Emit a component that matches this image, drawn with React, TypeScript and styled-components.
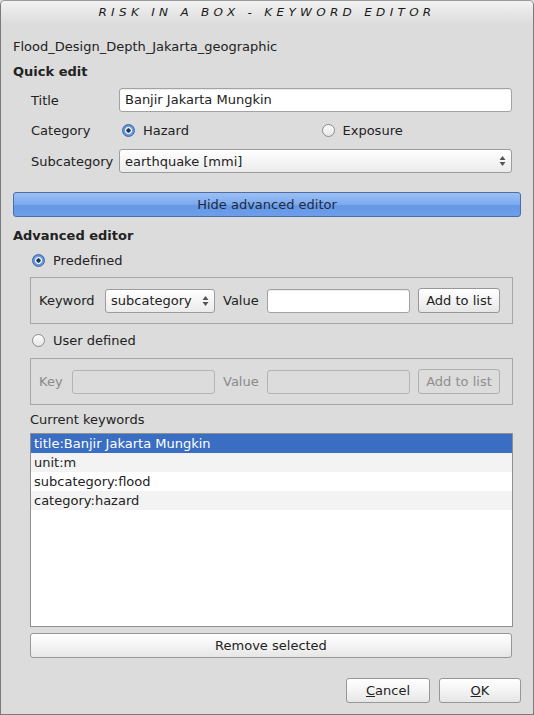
import React from "react";
import styled, { createGlobalStyle } from "styled-components";

const Global = createGlobalStyle`
  html, body { margin: 0; padding: 0; background: #dcdcdc; }
  body { font-family: "DejaVu Sans", "Liberation Sans", sans-serif; font-size: 13px; color: #222; }
  * { box-sizing: border-box; }
`;

const Window = styled.div`
  width: 534px;
  height: 715px;
  background: #dcdcdc;
  border: 1px solid #7a7a7a;
  border-top-color: #9a9a9a;
  border-radius: 5px 5px 0 0;
  display: flex;
  flex-direction: column;
  overflow: hidden;
`;

const TitleBar = styled.div`
  height: 24px;
  flex: none;
  display: flex;
  align-items: center;
  justify-content: center;
  background: linear-gradient(#f2f2f2, #e4e4e4 60%, #dcdcdc);
`;

const TitleText = styled.span`
  font-family: "DejaVu Sans", sans-serif;
  font-style: italic;
  font-size: 12px;
  letter-spacing: 4.3px;
  color: #1a1a1a;
  text-transform: uppercase;
  transform: scaleY(0.8);
`;

const Body = styled.div`
  flex: 1;
  display: flex;
  flex-direction: column;
  padding: 0 12px 0 12px;
`;

const Line = styled.div<{ $mt: number; $ml?: number }>`
  margin-top: ${(p) => p.$mt}px;
  margin-left: ${(p) => p.$ml ?? 0}px;
  height: 16px;
  line-height: 16px;
  white-space: nowrap;
`;

const SectionTitle = styled(Line)`
  font-weight: bold;
`;

const Form = styled.div`
  margin: 8px 9px 0 18px;
  display: grid;
  grid-template-columns: 88px 1fr;
  grid-auto-rows: 24px;
  row-gap: 6.5px;
  align-items: center;
`;

const Label = styled.span<{ $disabled?: boolean; $w?: number }>`
  white-space: nowrap;
  flex: none;
  ${(p) => (p.$w ? `width: ${p.$w}px;` : "")}
  color: ${(p) => (p.$disabled ? "#8a8a8a" : "#222")};
`;

const TextInput = styled.div<{ $disabled?: boolean }>`
  height: 24px;
  border: 1px solid ${(p) => (p.$disabled ? "#b4b4b4" : "#a2a2a2")};
  border-radius: 3px;
  background: ${(p) => (p.$disabled ? "#dcdcdc" : "#fff")};
  box-shadow: ${(p) => (p.$disabled ? "none" : "inset 0 1px 1px rgba(0,0,0,0.08)")};
  padding: 0 5px;
  line-height: 22px;
  white-space: nowrap;
  overflow: hidden;
  flex: 1;
  min-width: 0;
`;

const Combo = styled.div<{ $w?: number }>`
  height: 24px;
  ${(p) => (p.$w ? `width: ${p.$w}px; flex: none;` : "")}
  border: 1px solid #9c9c9c;
  border-radius: 3px;
  background: linear-gradient(#ffffff, #f6f6f6 45%, #ebebeb);
  padding: 0 5px;
  display: flex;
  align-items: center;
  justify-content: space-between;
  white-space: nowrap;
`;

const Arrows = () => (
  <svg width="7" height="12" viewBox="0 0 7 12">
    <path d="M3.5 1 L6.5 5 L0.5 5 Z" fill="#555" />
    <path d="M3.5 11 L6.5 7 L0.5 7 Z" fill="#555" />
  </svg>
);

const RadioGroup = styled.div`
  display: grid;
  grid-template-columns: 1fr 1fr;
  align-items: center;
`;

const RadioItem = styled.div<{ $ml?: number }>`
  display: flex;
  align-items: center;
  gap: 8px;
  margin-left: ${(p) => p.$ml ?? 3}px;
  height: 16px;
`;

const RadioDot = styled.span<{ $on?: boolean }>`
  width: 13px;
  height: 13px;
  border-radius: 50%;
  flex: none;
  border: 1px solid ${(p) => (p.$on ? "#3e66a4" : "#8d8d8d")};
  background: ${(p) =>
    p.$on
      ? "radial-gradient(circle, #1d3766 0 1.9px, #eef3fb 2.4px 3.2px, #6d9ce0 3.8px, #4f82cf 100%)"
      : "linear-gradient(#fdfdfd, #e6e6e6)"};
`;

const Radio: React.FC<{ on?: boolean; label: string; ml?: number }> = ({ on, label, ml }) => (
  <RadioItem $ml={ml}>
    <RadioDot $on={on} />
    <span>{label}</span>
  </RadioItem>
);

const RadioLine = styled.div<{ $mt: number }>`
  margin-top: ${(p) => p.$mt}px;
  height: 16px;
  display: flex;
`;

const BlueButton = styled.div`
  margin-top: 19px;
  height: 25px;
  flex: none;
  border: 1px solid #4d6ea3;
  border-radius: 3px;
  background: linear-gradient(#9cc0f4, #7aa9ee 50%, #6597e6 55%, #6d9ee9);
  display: flex;
  align-items: center;
  justify-content: center;
  color: #1d2a3d;
`;

const Button = styled.div<{ $w?: number; $disabled?: boolean }>`
  height: 25px;
  ${(p) => (p.$w ? `width: ${p.$w}px; flex: none;` : "")}
  border: 1px solid ${(p) => (p.$disabled ? "#b0b0b0" : "#979797")};
  border-radius: 3px;
  background: ${(p) => (p.$disabled ? "#dcdcdc" : "linear-gradient(#ffffff, #f4f4f4 50%, #e6e6e6)")};
  color: ${(p) => (p.$disabled ? "#8e8e8e" : "#222")};
  display: flex;
  align-items: center;
  justify-content: center;
  white-space: nowrap;
`;

const GroupBox = styled.div<{ $mt: number }>`
  margin: ${(p) => p.$mt}px 8px 0 17px;
  height: 47px;
  flex: none;
  border: 1px solid #a6a6a6;
  padding: 0 12px 0 8px;
  display: flex;
  align-items: center;
  gap: 8px;
`;

const List = styled.div`
  margin: 5px 8px 0 17px;
  height: 194px;
  flex: none;
  border: 1px solid #8f8f8f;
  background: #fff;
  display: flex;
  flex-direction: column;
`;

const Row = styled.div<{ $sel?: boolean; $alt?: boolean }>`
  height: 19px;
  line-height: 19px;
  padding-left: 3px;
  white-space: nowrap;
  background: ${(p) => (p.$sel ? "#3a6ec2" : p.$alt ? "#f3f3f3" : "#fff")};
  color: ${(p) => (p.$sel ? "#fff" : "#222")};
`;

const RemoveWrap = styled.div`
  margin: 6px 9px 0 17px;
  display: flex;
  flex-direction: column;
`;

const Footer = styled.div`
  margin-top: 20px;
  display: flex;
  justify-content: flex-end;
  gap: 9px;
`;

const U = styled.span`
  text-decoration: underline;
`;

const keywords = [
  "title:Banjir Jakarta Mungkin",
  "unit:m",
  "subcategory:flood",
  "category:hazard",
];

export default function App() {
  return (
    <>
      <Global />
      <Window>
        <TitleBar>
          <TitleText>Risk in a Box - Keyword Editor</TitleText>
        </TitleBar>
        <Body>
          <Line $mt={14}>Flood_Design_Depth_Jakarta_geographic</Line>
          <SectionTitle $mt={9}>Quick edit</SectionTitle>
          <Form>
            <Label>Title</Label>
            <TextInput>Banjir Jakarta Mungkin</TextInput>
            <Label>Category</Label>
            <RadioGroup>
              <Radio on label="Hazard" ml={3} />
              <Radio label="Exposure" ml={6} />
            </RadioGroup>
            <Label>Subcategory</Label>
            <Combo>
              <span>earthquake [mmi]</span>
              <Arrows />
            </Combo>
          </Form>
          <BlueButton>Hide advanced editor</BlueButton>
          <SectionTitle $mt={11}>Advanced editor</SectionTitle>
          <RadioLine $mt={8}>
            <Radio on label="Predefined" ml={19} />
          </RadioLine>
          <GroupBox $mt={9}>
            <Label $w={58}>Keyword</Label>
            <Combo $w={110}>
              <span>subcategory</span>
              <Arrows />
            </Combo>
            <Label $w={36}>Value</Label>
            <TextInput />
            <Button $w={82}>Add to list</Button>
          </GroupBox>
          <RadioLine $mt={8}>
            <Radio label="User defined" ml={19} />
          </RadioLine>
          <GroupBox $mt={10}>
            <Label $w={25} $disabled>Key</Label>
            <TextInput $disabled />
            <Label $w={36} $disabled>Value</Label>
            <TextInput $disabled />
            <Button $w={82} $disabled>Add to list</Button>
          </GroupBox>
          <Line $mt={7} $ml={17}>Current keywords</Line>
          <List>
            {keywords.map((k, i) => (
              <Row key={k} $sel={i === 0} $alt={i % 2 === 1}>
                {k}
              </Row>
            ))}
          </List>
          <RemoveWrap>
            <Button>Remove selected</Button>
          </RemoveWrap>
          <Footer>
            <Button $w={84}>
              <U>C</U>ancel
            </Button>
            <Button $w={82}>
              <U>O</U>K
            </Button>
          </Footer>
        </Body>
      </Window>
    </>
  );
}
